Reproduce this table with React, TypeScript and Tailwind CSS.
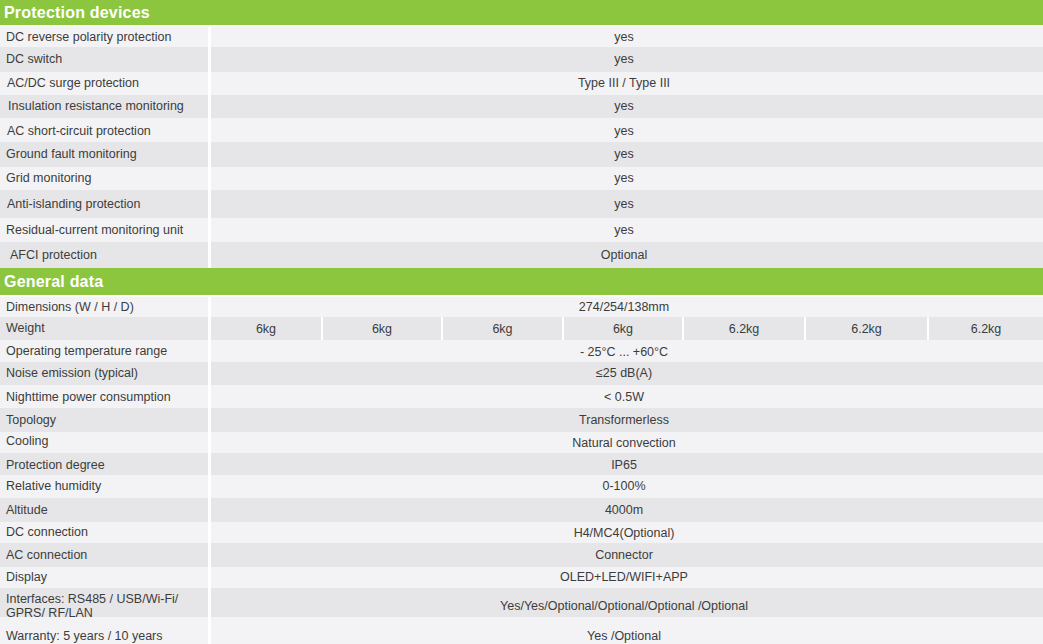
import React from "react";

type Row = {
  label: string;
  value?: string;
  cells?: string[];
  h: number;
  lpad?: string;
  two?: boolean;
  lextra?: string;
  rextra?: string;
};

const protection: Row[] = [
  { label: "DC reverse polarity protection", value: "yes", h: 20 },
  { label: "DC switch", value: "yes", h: 25 },
  { label: "AC/DC surge protection", value: "Type III / Type III", h: 23, lpad: "pl-[7px]" },
  { label: "Insulation resistance monitoring", value: "yes", h: 23, lpad: "pl-[8px]" },
  { label: "AC short-circuit protection", value: "yes", h: 24, lpad: "pl-[7px]", lextra: "pt-[2px]", rextra: "pt-[2px]" },
  { label: "Ground fault monitoring", value: "yes", h: 25 },
  { label: "Grid monitoring", value: "yes", h: 23 },
  { label: "Anti-islanding protection", value: "yes", h: 28, lpad: "pl-[7px]" },
  { label: "Residual-current monitoring unit", value: "yes", h: 24, lextra: "pt-[1px]", rextra: "pt-[1px]" },
  { label: "AFCI protection", value: "Optional", h: 26, lpad: "pl-[10px]", lextra: "pt-[1px]", rextra: "pt-[1px]" },
];

const general: Row[] = [
  { label: "Dimensions (W / H / D)", value: "274/254/138mm", h: 20 },
  { label: "Weight", cells: ["6kg", "6kg", "6kg", "6kg", "6.2kg", "6.2kg", "6.2kg"], h: 23, lextra: "pb-[1px]", rextra: "pt-[2px]" },
  { label: "Operating temperature range", value: "- 25°C ... +60°C", h: 22, rextra: "pt-[2px]" },
  { label: "Noise emission (typical)", value: "≤25 dB(A)", h: 23 },
  { label: "Nighttime power consumption", value: "< 0.5W", h: 23, lextra: "pt-[2px]", rextra: "pt-[2px]" },
  { label: "Topology", value: "Transformerless", h: 24 },
  { label: "Cooling", value: "Natural convection", h: 21, lextra: "pb-[2px]", rextra: "pt-[1px]" },
  { label: "Protection degree", value: "IP65", h: 22, lextra: "pt-[2px]", rextra: "pt-[2px]" },
  { label: "Relative humidity", value: "0-100%", h: 23 },
  { label: "Altitude", value: "4000m", h: 24 },
  { label: "DC connection", value: "H4/MC4(Optional)", h: 21, rextra: "pt-[2px]" },
  { label: "AC connection", value: "Connector", h: 24 },
  { label: "Display", value: "OLED+LED/WIFI+APP", h: 21 },
  {
    label: "Interfaces: RS485 / USB/Wi-Fi/\nGPRS/ RF/LAN",
    value: "Yes/Yes/Optional/Optional/Optional /Optional",
    h: 29,
    two: true,
    lextra: "pt-[6px]",
    rextra: "pt-[8px]",
  },
  { label: "Warranty: 5 years / 10 years", value: "Yes /Optional", h: 38 },
];

const heights: Record<number, string> = {
  20: "h-[20px]",
  21: "h-[21px]",
  22: "h-[22px]",
  23: "h-[23px]",
  24: "h-[24px]",
  25: "h-[25px]",
  26: "h-[26px]",
  27: "h-[27px]",
  28: "h-[28px]",
  29: "h-[29px]",
  38: "h-[38px]",
};

function Header({ title, h }: { title: string; h: string }) {
  return (
    <div className={`${h} shrink-0 bg-[#8cc63f] flex items-center pl-[4px] text-white text-[16px] font-bold tracking-[0.2px]`}>
      {title}
    </div>
  );
}

function TableRow({ row, i }: { row: Row; i: number }) {
  const bg = i % 2 === 0 ? "bg-[#f3f3f5]" : "bg-[#e6e6e8]";
  const txt = "text-[12.5px] text-[#3c3c3c]";
  return (
    <div className={`flex gap-[3px] shrink-0 ${heights[row.h]}`}>
      <div className={`w-[208px] shrink-0 ${bg} flex items-center ${row.lpad ?? "pl-[6px]"} ${row.lextra ?? ""} ${txt}`}>
        {row.two ? (
          <div className="leading-[14px] whitespace-pre-line">{row.label}</div>
        ) : (
          <span className="whitespace-nowrap">{row.label}</span>
        )}
      </div>
      {row.cells ? (
        <div className="flex-1 grid grid-cols-[110px_118px_119px_118px_120px_121px_114px] gap-x-[2px]">
          {row.cells.map((c, k) => (
            <div key={k} className={`${bg} flex items-center justify-center ${row.rextra ?? ""} ${txt}`}>
              {c}
            </div>
          ))}
        </div>
      ) : (
        <div className={`flex-1 ${bg} flex items-center justify-center pr-[6px] ${row.rextra ?? ""} ${txt}`}>{row.value}</div>
      )}
    </div>
  );
}

export default function App() {
  return (
    <div className="w-[1043px] h-[644px] overflow-hidden bg-white flex flex-col font-['Liberation_Sans',Arial,sans-serif]">
      <Header title="Protection devices" h="h-[25px]" />
      <div className="h-[2px] shrink-0 bg-[#f7f7f7]" />
      {protection.map((r, i) => (
        <TableRow key={r.label} row={r} i={i} />
      ))}
      <Header title="General data" h="h-[27px]" />
      <div className="h-[2px] shrink-0 bg-white" />
      {general.map((r, i) => (
        <TableRow key={r.label} row={r} i={i} />
      ))}
    </div>
  );
}
